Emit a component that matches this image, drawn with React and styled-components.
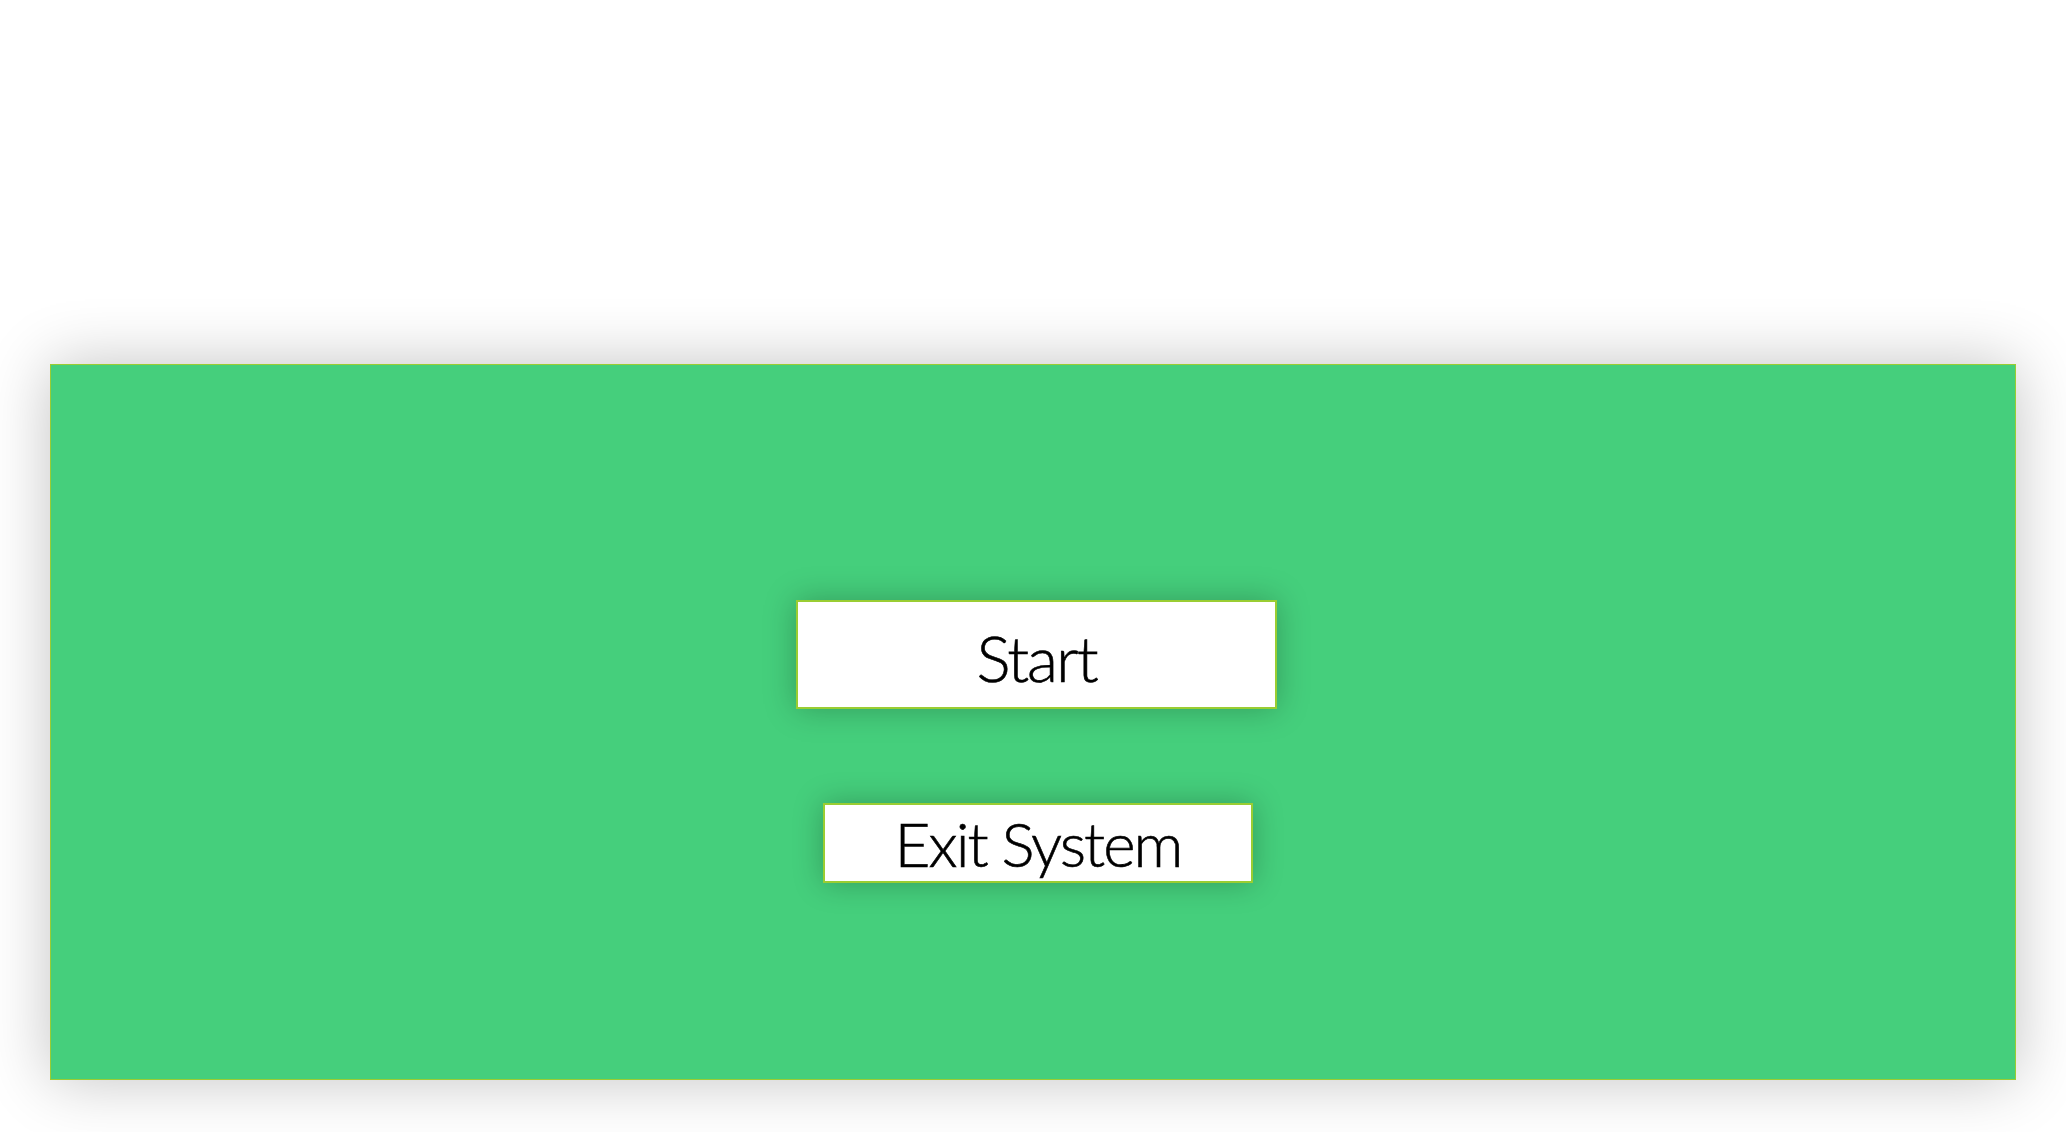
import React from 'react';
import styled, { createGlobalStyle } from 'styled-components';

const GlobalStyle = createGlobalStyle`
  body {
    margin: 0;
    background: #ffffff;
    font-family: 'Lato', 'Liberation Sans', sans-serif;
  }
`;

// Page wrapper
const Page = styled.div`
  padding: 364px 50px 52px;
`;

const Panel = styled.div`
  height: 716px;
  box-sizing: border-box;
  background-color: #45cf7c;
  border: 1px solid yellowgreen;
  box-shadow: 0 0 60px rgba(0, 0, 0, 0.24);
  display: flex;
  flex-direction: column;
  align-items: center;
  padding-top: 235px;
`;

const MenuButton = styled.button`
  box-sizing: border-box;
  width: ${props => props.w}px;
  height: ${props => props.h}px;
  margin-top: ${props => props.top || 0}px;
  margin-left: ${props => props.shift || 0}px;
  background: #ffffff;
  border: 2px solid yellowgreen;
  border-radius: 0;
  box-shadow: 0 0 30px rgba(0, 0, 0, 0.25);
  font-family: 'Lato', 'Liberation Sans', sans-serif;
  font-weight: 300;
  font-size: ${props => props.size}px;
  letter-spacing: -2px;
  color: #000;
  -webkit-text-stroke: 0.6px #000;
  cursor: pointer;
  padding: ${props => props.pad || 0}px 0 0;
  display: flex;
  align-items: center;
  justify-content: center;
`;

const App = () => {
  return (
    <>
      <GlobalStyle />
      <Page>
        <Panel>
          <MenuButton w={481} h={109} size={64} shift={7} pad={6}>Start</MenuButton>
          <MenuButton w={430} h={80} size={62} top={94} shift={10}>Exit System</MenuButton>
        </Panel>
      </Page>
    </>
  );
};

export default App;
